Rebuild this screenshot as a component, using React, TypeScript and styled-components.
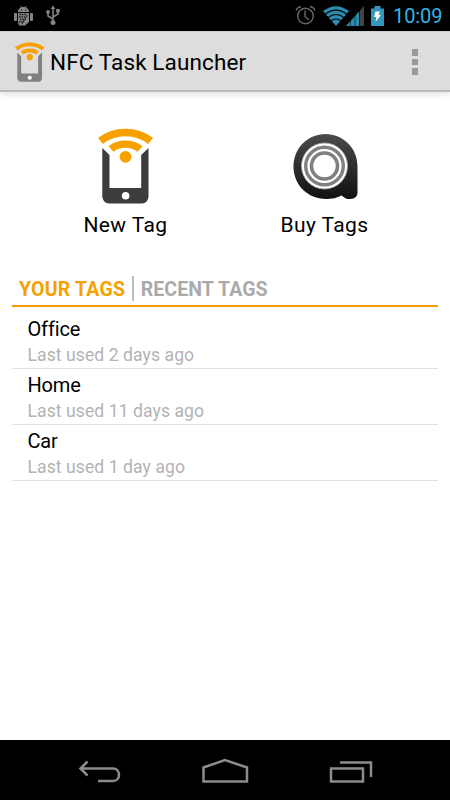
import React from 'react';
import styled, { createGlobalStyle } from 'styled-components';

const GlobalStyle = createGlobalStyle`
  * { box-sizing: border-box; }
  body { margin: 0; background: #fff; font-family: Roboto, "Liberation Sans", sans-serif; }
  svg { display: block; flex: none; }
`;

const Screen = styled.div`
  width: 450px;
  height: 800px;
  display: flex;
  flex-direction: column;
  background: #fff;
  overflow: hidden;
`;

const StatusBar = styled.header`
  height: 31px;
  flex: none;
  background: #000;
  display: flex;
  align-items: center;
  justify-content: space-between;
  padding: 0 8px 0 13px;
`;

const StatusGroup = styled.div`
  display: flex;
  align-items: center;
`;

const Clock = styled.span`
  width: 49px;
  margin-left: 9px;
  font-size: 20px;
  line-height: 31px;
  letter-spacing: -0.1px;
  color: #33b5e5;
  white-space: nowrap;
  padding-top: 1px;
`;

const ActionBar = styled.div`
  height: 61px;
  flex: none;
  display: flex;
  align-items: center;
  padding: 0 32px 0 15px;
  background: #ddd;
  border-top: 1px solid #cfcfcf;
  border-bottom: 2px solid #b9b9b9;
  box-shadow: 0 2px 7px rgba(0, 0, 0, 0.13);
`;

const Title = styled.h1`
  flex: 1;
  margin: 2px 0 0 5px;
  font-size: 22.5px;
  font-weight: 400;
  letter-spacing: 0.12px;
  line-height: 28px;
  color: #000;
`;

const Overflow = styled.div`
  display: grid;
  gap: 3px;
  padding-top: 2px;
`;

const Dot = styled.i`
  width: 6px;
  height: 6.5px;
  background: #999;
`;

const Actions = styled.div`
  flex: none;
  height: 173px;
  display: grid;
  grid-template-columns: 199px 199px;
  justify-content: center;
  padding-top: 32px;
`;

const Action = styled.div`
  display: flex;
  flex-direction: column;
  align-items: center;
`;

const ActionLabel = styled.span`
  margin: 7px 0 0 0;
  font-size: 21px;
  line-height: 28px;
  letter-spacing: 0.4px;
  color: #000;
`;

const Tabs = styled.nav`
  flex: none;
  height: 42px;
  margin: 0 12px;
  padding: 0 7px;
  display: flex;
  align-items: center;
  border-bottom: 2px solid #f39c05;
`;

const Tab = styled.span<{ $active?: boolean }>`
  font-size: 19.5px;
  font-weight: 700;
  line-height: 24px;
  letter-spacing: ${(p) => (p.$active ? 0.22 : 0.1)}px;
  padding-top: 10px;
  color: ${(p) => (p.$active ? '#f7a100' : '#aaa')};
  white-space: nowrap;
`;

const TabDivider = styled.i`
  width: 2px;
  height: 25px;
  margin: 6px 6.5px 0 7px;
  background: #bcbcbc;
`;

const List = styled.ul`
  flex: 1;
  margin: 0 12px;
  padding: 0;
  list-style: none;
`;

const Row = styled.li`
  height: 55.8px;
  padding: 3px 0 0 15.5px;
  border-bottom: 1.5px solid #e2e2e2;
  &:first-child { height: 62px; padding-top: 9px; }
`;

const RowName = styled.div`
  height: 26px;
  font-size: 20px;
  line-height: 26px;
  letter-spacing: -0.15px;
  color: #000;
`;

const RowMeta = styled.div`
  height: 24px;
  font-size: 17.6px;
  line-height: 26px;
  letter-spacing: 0.06px;
  color: #b3b3b3;
`;

const NavBar = styled.footer`
  flex: none;
  height: 60px;
  background: #000;
  display: grid;
  grid-template-columns: 126px 126px 126px;
  justify-content: center;
  justify-items: center;
  padding-top: 15px;
`;

function PhoneTag({ width, height, body }: { width: number; height: number; body: string }) {
  return (
    <svg width={width} height={height} viewBox="0 0 56 76" preserveAspectRatio="none">
      <path
        fill={body}
        d="M4.300 20L11.500 27V60H43.200V27L50.500 20V69Q49.500 75 44 75.600H11Q5.500 75 4.300 69Z"
      />
      <circle cx="27.600" cy="67.700" r="3.800" fill="#fff" />
      <path fill="#f7a100" d="M0 10Q12 .8 27.500 .8T55 10L50 16Q40.500 8.300 27.500 8.300T5 16Z" />
      <path fill="#f7a100" d="M10.500 18.200Q17.500 12.500 27.500 12.500T44.500 18.200L39.500 23.800Q34.500 19.800 27.500 19.800T15.500 23.800Z" />
      <circle cx="27.500" cy="28.800" r="5.900" fill="#f7a100" />
    </svg>
  );
}

function TapeTag() {
  return (
    <svg width="68" height="76" viewBox="-1 0 68 76">
      <defs>
        <linearGradient id="tape" x1="0" y1="0" x2="0" y2="1">
          <stop offset="0" stopColor="#4b4b4b" />
          <stop offset="1" stopColor="#111" />
        </linearGradient>
      </defs>
      <path
        fill="url(#tape)"
        d="M33.500 6C51 6 65.500 20 65.500 38V64.500C65.500 70 61 71 57 71C53 71 52 69 49.500 67.500C45 70 40 71 34 71C16 71 1.500 57 1.500 38.500C1.500 20 16 6 33.500 6Z"
      />
      <circle cx="32.500" cy="38" r="23" fill="#fff" stroke="#aaa" strokeWidth=".8" />
      <g fill="none" stroke="#808080">
        <circle cx="32.500" cy="38" r="18.800" strokeWidth="3.400" />
        <circle cx="32.500" cy="38" r="13" strokeWidth="3.600" />
      </g>
    </svg>
  );
}

function DebugIcon() {
  return (
    <svg width="21" height="22" viewBox="0 0 21 22">
      <g fill="#858585">
        <path d="M5 7C5 4.500 6.500 3 8 2.500L7 .5 9 2H12L14 .5 13 2.500C14.800 3.200 16 4.700 16 7Z" />
        <rect x="1" y="8" width="3" height="8" rx="1" />
        <rect x="17" y="8" width="3" height="8" rx="1" />
        <path d="M5 8H16V17L12 20.500H6L5 18Z" />
      </g>
      <path d="M6.500 9.500H14M6 12H13M7 14.500H12.500M6 17H10" stroke="#181818" strokeWidth="1.500" strokeDasharray="1.500 .9" />
      <path d="M14.500 10L9 19" stroke="#222" strokeWidth="1" />
      <path d="M8 5H9M12 5H13" stroke="#000" />
    </svg>
  );
}

function UsbIcon() {
  return (
    <svg width="14" height="21" viewBox="0 0 14 21">
      <g fill="none" stroke="#858585" strokeWidth="1.500">
        <path d="M7 3V17M7 14L2 11V7M7 12L12 9V5" />
      </g>
      <g fill="#858585">
        <path d="M7 .5L9.300 4H4.700Z" />
        <circle cx="2" cy="7" r="1.900" />
        <rect x="10.200" y="4" width="3.500" height="3.500" />
        <circle cx="7" cy="17.500" r="2.500" />
      </g>
    </svg>
  );
}

function AlarmIcon() {
  return (
    <svg width="21" height="21" viewBox="0 0 21 21" fill="none" stroke="#686868" strokeWidth="1.400">
      <circle cx="10.500" cy="11" r="7.800" />
      <path d="M10 5.500V11.500L14 15M1 5.500Q2.500 2 6 1.500M20 5.500Q18.500 2 15 1.500" />
    </svg>
  );
}

function WifiIcon() {
  return (
    <svg width="26" height="20" viewBox="0 0 26 20">
      <path fill="#2b8cb0" d="M0 5Q13-4.500 26 5L13 20Z" />
      <g fill="none" stroke="#000" strokeWidth="1.100">
        <path d="M2 8.300Q13 0 24 8.300M5 11.500Q13 5.500 21 11.500M8 15Q13 11 18 15" />
      </g>
    </svg>
  );
}

function SignalIcon() {
  return (
    <svg width="18" height="20" viewBox="0 0 18 20">
      <path fill="#2b8cb0" d="M0 20L13.500 5V20Z" />
      <path fill="#444" d="M14 4.500L18 0V20H14Z" />
      <path d="M4.500 14V20M9 9V20M13.500 4V20" stroke="#000" strokeWidth=".5" />
    </svg>
  );
}

function BatteryIcon() {
  return (
    <svg width="13" height="20" viewBox="0 0 13 20">
      <path fill="#3396ba" d="M0 2.500H3.500V0H9.500V2.500H13V20H0Z" />
      <path fill="#fff" d="M4.500 5.500H9L7.500 9H10L4.500 16L5.500 11H3Z" />
    </svg>
  );
}

const StatusIcon = styled.span<{ $left?: number; $top?: number }>`
  margin-left: ${(p) => p.$left ?? 0}px;
  padding-top: ${(p) => p.$top ?? 0}px;
`;

const tags = [
  { name: 'Office', used: 'Last used 2 days ago' },
  { name: 'Home', used: 'Last used 11 days ago' },
  { name: 'Car', used: 'Last used 1 day ago' },
];

export default function App() {
  return (
    <Screen>
      <GlobalStyle />
      <StatusBar>
        <StatusGroup>
          <StatusIcon><DebugIcon /></StatusIcon>
          <StatusIcon $left={12}><UsbIcon /></StatusIcon>
        </StatusGroup>
        <StatusGroup>
          <StatusIcon><AlarmIcon /></StatusIcon>
          <StatusIcon $left={7}><WifiIcon /></StatusIcon>
          <StatusIcon $left={-3}><SignalIcon /></StatusIcon>
          <StatusIcon $left={7}><BatteryIcon /></StatusIcon>
          <Clock>10:09</Clock>
        </StatusGroup>
      </StatusBar>
      <ActionBar>
        <StatusIcon $top={1}><PhoneTag width={30} height={40} body="#808080" /></StatusIcon>
        <Title>NFC Task Launcher</Title>
        <Overflow><Dot /><Dot /><Dot /></Overflow>
      </ActionBar>
      <Actions>
        <Action>
          <StatusIcon $top={4}><PhoneTag width={56} height={76} body="#3d3d3d" /></StatusIcon>
          <ActionLabel>New Tag</ActionLabel>
        </Action>
        <Action>
          <StatusIcon $top={4}><TapeTag /></StatusIcon>
          <ActionLabel>Buy Tags</ActionLabel>
        </Action>
      </Actions>
      <Tabs>
        <Tab $active>YOUR TAGS</Tab>
        <TabDivider />
        <Tab>RECENT TAGS</Tab>
      </Tabs>
      <List>
        {tags.map((tag) => (
          <Row key={tag.name}>
            <RowName>{tag.name}</RowName>
            <RowMeta>{tag.used}</RowMeta>
          </Row>
        ))}
      </List>
      <NavBar>
        <svg width="44" height="30" viewBox="-1 0 44 30" fill="none" stroke="#8c8c8c" strokeWidth="2.500">
          <path d="M2 13.500H35C43 13.500 43 26 35 26H20M9.500 6.500L2.500 13.500L9.500 20.500" />
        </svg>
        <svg width="48" height="30" viewBox="0 0 48 30" fill="none" stroke="#8c8c8c" strokeWidth="2.500">
          <path d="M2.500 26.500V12.500L24 5L46 12.500V26.500Z" />
        </svg>
        <svg width="44" height="30" viewBox="0 0 44 30" fill="none" stroke="#8c8c8c" strokeWidth="2.500">
          <rect x="2" y="13.500" width="32" height="13" />
          <path d="M11 7.500H42V22" />
        </svg>
      </NavBar>
    </Screen>
  );
}
